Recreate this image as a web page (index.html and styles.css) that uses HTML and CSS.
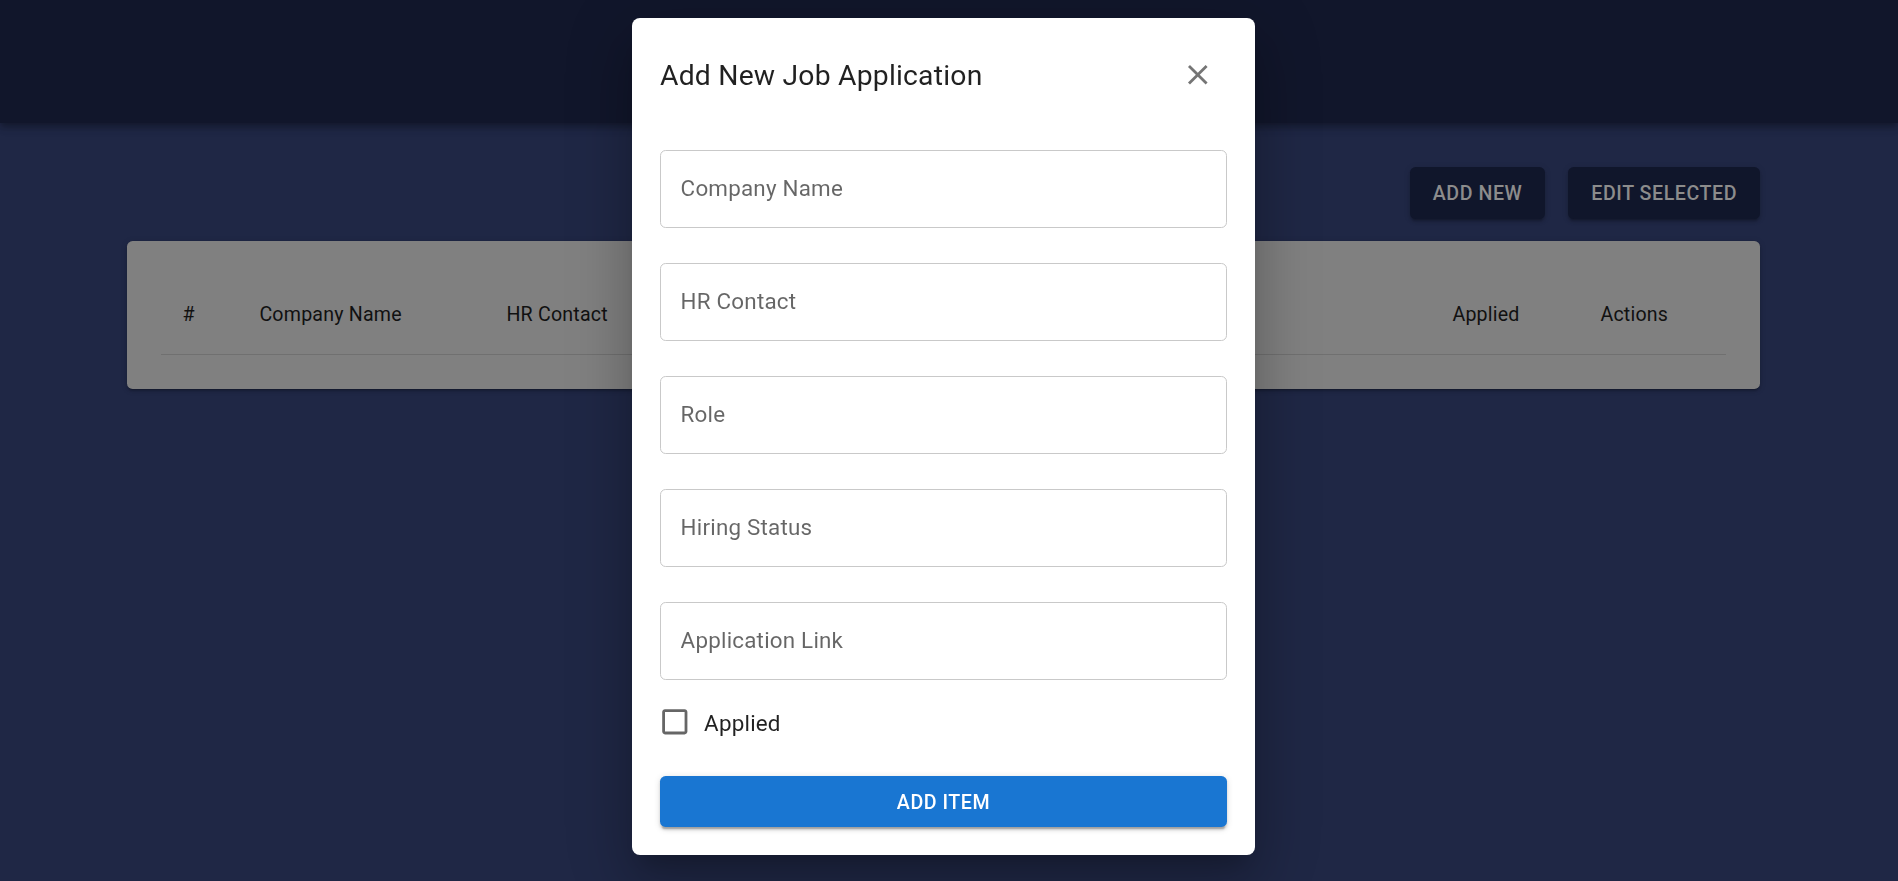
FILE: index.html
```html
<!DOCTYPE html>
<html lang="en">
<head>
<meta charset="utf-8">
<title>Job Applications</title>
<link rel="stylesheet" href="styles.css">
</head>
<body>
<header class="topbar"></header>
<main class="main">
  <div class="toolbar">
    <button class="btn-dark" type="button">Add New</button>
    <button class="btn-dark" type="button">Edit Selected</button>
  </div>
  <div class="card">
    <table class="grid">
      <colgroup>
        <col class="c-num"><col class="c-company"><col class="c-hr"><col class="c-role"><col class="c-status"><col class="c-link"><col class="c-applied"><col class="c-actions">
      </colgroup>
      <thead>
        <tr><th>#</th><th>Company Name</th><th>HR Contact</th><th>Role</th><th>Hiring Status</th><th>Application Link</th><th>Applied</th><th>Actions</th></tr>
      </thead>
    </table>
  </div>
</main>
<div class="dialog" role="dialog" aria-labelledby="dlg-title">
  <div class="dialog-head">
    <h2 class="dialog-title" id="dlg-title">Add New Job Application</h2>
    <button class="close" type="button" aria-label="close">
      <svg viewBox="0 0 24 24" class="close-icon"><path d="M19 6.41 17.59 5 12 10.59 6.41 5 5 6.41 10.59 12 5 17.590 6.41 19 12 13.41 17.59 19 19 17.59 13.41 12z"/></svg>
    </button>
  </div>
  <form class="form">
    <div class="fields">
      <input class="field" type="text" placeholder="Company Name">
      <input class="field" type="text" placeholder="HR Contact">
      <input class="field" type="text" placeholder="Role">
      <input class="field" type="text" placeholder="Hiring Status">
      <input class="field" type="text" placeholder="Application Link">
    </div>
    <label class="check">
      <svg viewBox="0 0 24 24" class="check-icon"><path d="M19 5v14H5V5h14m0-2H5c-1.1 0-2 .9-2 2v14c0 1.1.9 2 2 2h14c1.1 0 2-.9 2-2V5c0-1.1-.9-2-2-2z"/></svg>
      <span class="check-label">Applied</span>
    </label>
    <button class="btn-primary" type="button">Add Item</button>
  </form>
</div>
</body>
</html>
```
FILE: styles.css
```css
html, body {
  margin: 0;
  padding: 0;
}
body {
  background: #1f2745;
  font-family: Roboto, "Liberation Sans", Arial, sans-serif;
  height: 881px;
  overflow: hidden;
}
.topbar {
  height: 123px;
  background: #11162b;
  box-shadow: 0 3px 6px -1px rgba(0,0,0,0.2), 0 5px 7px 0 rgba(0,0,0,0.14), 0 1px 14px 0 rgba(0,0,0,0.12);
  position: relative;
}
.main {
  padding: 0 138px 0 127px;
}
.toolbar {
  display: flex;
  justify-content: flex-end;
  gap: 23px;
  margin-top: 44px;
}
.btn-dark {
  height: 52px;
  padding: 0 23px;
  border: none;
  border-radius: 5.6px;
  background: #10162b;
  color: #8c8c8c;
  font-family: Roboto, "Liberation Sans", Arial, sans-serif;
  font-size: 19.6px;
  font-weight: 500;
  letter-spacing: 0.56px;
  text-transform: uppercase;
  box-shadow: 0 3px 2px -2px rgba(0,0,0,0.2), 0 3px 3px 0 rgba(0,0,0,0.14), 0 1px 7px 0 rgba(0,0,0,0.12);
}
.card {
  margin-top: 22px;
  background: #808080;
  border-radius: 5.6px;
  padding: 35px 34px 34px;
  box-shadow: 0 3px 2px -2px rgba(0,0,0,0.2), 0 2px 3px 0 rgba(0,0,0,0.14), 0 1px 7px 0 rgba(0,0,0,0.12);
}
.grid {
  width: 100%;
  table-layout: fixed;
  border-collapse: collapse;
}
.c-num { width: 77px; }
.c-company { width: 247px; }
.c-hr { width: 215px; }
.c-role { width: 150px; }
.c-status { width: 170px; }
.c-link { width: 411px; }
.c-applied { width: 148px; }
.c-actions { width: 147px; }
.grid th {
  text-align: left;
  font-weight: 400;
  font-size: 19.6px;
  letter-spacing: 0.21px;
  line-height: 33.6px;
  padding: 22.4px 22.4px 22.4px 21.4px;
  color: #111;
  border-bottom: 1px solid #707070;
  white-space: nowrap;
  overflow: hidden;
}
.dialog {
  position: fixed;
  left: 632px;
  top: 18px;
  width: 623px;
  box-sizing: border-box;
  padding: 28px;
  background: #fff;
  border-radius: 8px;
  box-shadow: 0 15px 21px -10px rgba(0,0,0,0.2), 0 34px 53px 4px rgba(0,0,0,0.14), 0 13px 64px 11px rgba(0,0,0,0.12);
}
.dialog-head {
  display: flex;
  align-items: center;
  justify-content: space-between;
  height: 58px;
}
.dialog-title {
  margin: 2px 0 0;
  font-size: 28.3px;
  font-weight: 400;
  letter-spacing: 0.21px;
  line-height: 1.6;
  color: rgba(0,0,0,0.87);
}
.close {
  width: 56px;
  height: 56px;
  padding: 11.2px;
  margin-right: 1.5px;
  border: none;
  background: none;
  display: flex;
  align-items: center;
  justify-content: center;
}
.close-icon {
  width: 33.6px;
  height: 33.6px;
  fill: rgba(0,0,0,0.54);
  flex: none;
}
.form {
  margin: 0;
}
.fields {
  margin-top: 46px;
  display: flex;
  flex-direction: column;
  gap: 35px;
}
.field {
  display: block;
  width: 100%;
  height: 78px;
  box-sizing: border-box;
  border: 1px solid #c9c9c9;
  border-radius: 5.6px;
  padding: 0 19.6px 2px;
  font-family: Roboto, "Liberation Sans", Arial, sans-serif;
  font-size: 22.4px;
  letter-spacing: 0.21px;
  color: rgba(0,0,0,0.87);
  background: #fff;
  outline: none;
}
.field::placeholder {
  color: rgba(0,0,0,0.6);
  opacity: 1;
}
.check {
  margin-top: 14px;
  height: 56px;
  display: flex;
  align-items: center;
  gap: 13px;
}
.check-icon {
  width: 33.6px;
  height: 33.6px;
  margin-left: -2.5px;
  fill: rgba(0,0,0,0.6);
  flex: none;
}
.check-label {
  font-size: 22.4px;
  letter-spacing: 0.21px;
  color: rgba(0,0,0,0.87);
  padding-top: 2px;
}
.btn-primary {
  display: block;
  margin-top: 26px;
  width: 100%;
  height: 51px;
  padding-top: 2px;
  border: none;
  border-radius: 5.6px;
  background: #1976d2;
  color: #fff;
  font-family: Roboto, "Liberation Sans", Arial, sans-serif;
  font-size: 19.6px;
  font-weight: 500;
  letter-spacing: 0.56px;
  text-transform: uppercase;
  box-shadow: 0 4px 1.4px -2.8px rgba(0,0,0,0.2), 0 2.8px 2.8px 0 rgba(0,0,0,0.14), 0 1.4px 7px 0 rgba(0,0,0,0.12);
}
```
